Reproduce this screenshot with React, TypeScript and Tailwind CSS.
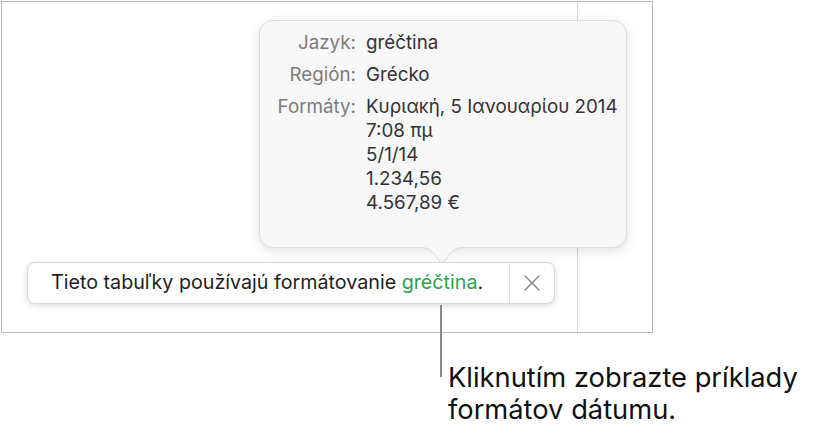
import { X } from 'lucide-react';

const formats = ['Κυριακή, 5 Ιανουαρίου 2014', '7:08 πμ', '5/1/14', '1.234,56', '4.567,89 €'];

function InfoRow({ label, children }: { label: string; children: React.ReactNode }) {
  return (
    <div className="flex gap-[10px]">
      <span className="w-[86px] shrink-0 text-right text-[#7c7c7c]">{label}</span>
      <div className="flex flex-col text-[#333333]">{children}</div>
    </div>
  );
}

export default function App() {
  return (
    <div
      className="relative h-[438px] w-[814px] overflow-hidden bg-white"
      style={{ fontFamily: 'Inter, "Liberation Sans", Arial, sans-serif' }}
    >
      {/* sheet canvas */}
      <div className="absolute left-[1px] top-[1px] flex h-[332px] w-[652px] border border-[#b8b8b8] bg-white">
        <div className="w-[576px] border-r border-[#d6d6d6]" />
        <div className="flex-1" />
      </div>

      {/* language popover */}
      <div className="absolute left-[259px] top-[20px] h-[228px] w-[368px] rounded-[14px] border border-[#dcdcdc] bg-[#f7f7f7] shadow-[0_3px_12px_rgba(0,0,0,0.12)]">
        <div className="flex flex-col gap-2 pl-[10px] pt-[10px] text-[18.8px] leading-[24px]">
          <InfoRow label="Jazyk:">
            <span>gréčtina</span>
          </InfoRow>
          <InfoRow label="Región:">
            <span>Grécko</span>
          </InfoRow>
          <InfoRow label="Formáty:">
            {formats.map(f => (
              <span key={f}>{f}</span>
            ))}
          </InfoRow>
        </div>
      </div>
      <svg className="absolute left-[416px] top-[246px]" width="54" height="22" viewBox="0 0 54 22">
        <path d="M0 1 C10 1 14 3 18 8 L26 19 L34 8 C38 3 42 1 54 1" fill="#f7f7f7" stroke="#dcdcdc" strokeWidth="1" />
        <rect x="0" y="-1" width="54" height="2" fill="#f7f7f7" />
      </svg>

      {/* locale banner */}
      <div className="absolute left-[27px] top-[262px] flex h-[42px] w-[528px] items-center rounded-[8px] border border-[#d8d8d8] bg-white shadow-[0_2px_6px_rgba(0,0,0,0.14)]">
        <p className="flex-1 pl-[23px] text-[19.7px] text-[#1e1e1e]">
          Tieto tabuľky používajú formátovanie <span className="text-[#2ca24d]">gréčtina</span>.
        </p>
        <div className="flex h-full w-[45px] items-center justify-center border-l border-[#e2e2e2]">
          <X className="h-[28px] w-[28px] text-[#808080]" strokeWidth={1.2} />
        </div>
      </div>

      {/* callout */}
      <div className="absolute left-[440px] top-[305px] h-[72px] w-[2px] bg-[#8a8a8a]" />
      <p className="absolute left-[448px] top-[362px] text-[27.3px] leading-[32px] text-[#111111]">
        Kliknutím zobrazte príklady
        <br />
        formátov dátumu.
      </p>
    </div>
  );
}
